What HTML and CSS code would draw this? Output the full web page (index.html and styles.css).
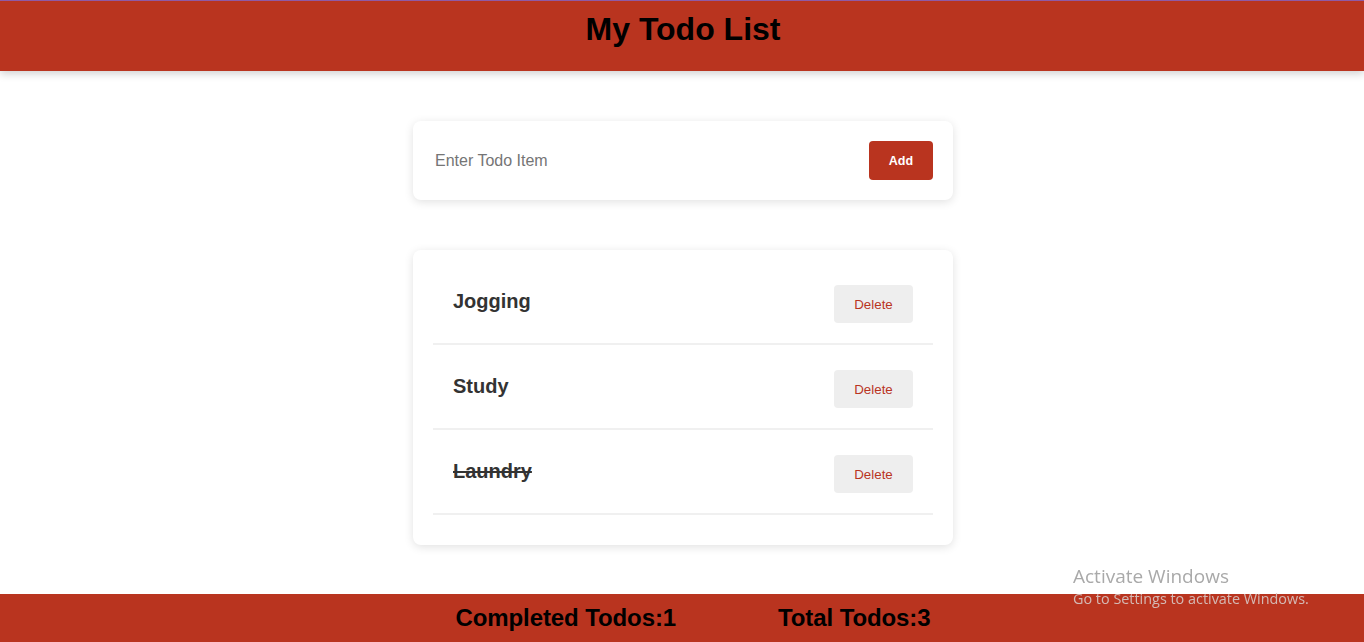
FILE: index.html
```html
<!DOCTYPE html>
<html lang="en">
<head>
<meta charset="utf-8">
<title>My Todo List</title>
<link rel="stylesheet" href="styles.css">
</head>
<body>
  <header class="app-header">
    <h1 class="app-title">My Todo List</h1>
  </header>
  <main class="app-main">
    <form class="card add-form">
      <input class="todo-input" type="text" placeholder="Enter Todo Item">
      <button class="add-btn" type="button">Add</button>
    </form>
    <ul class="card todo-list">
      <li class="todo-row">
        <span class="todo-text">Jogging</span>
        <button class="delete-btn" type="button">Delete</button>
      </li>
      <li class="todo-row">
        <span class="todo-text">Study</span>
        <button class="delete-btn" type="button">Delete</button>
      </li>
      <li class="todo-row">
        <span class="todo-text done">Laundry</span>
        <button class="delete-btn" type="button">Delete</button>
      </li>
    </ul>
  </main>
  <footer class="app-footer">
    <span class="stat">Completed Todos:1</span>
    <span class="stat">Total Todos:3</span>
  </footer>
  <div class="activate">
    <div class="activate-title">Activate Windows</div>
    <div class="activate-sub">Go to Settings to activate Windows.</div>
  </div>
</body>
</html>
```
FILE: styles.css
```css
* { box-sizing: border-box; }

html, body { height: 100%; }

body {
  margin: 0;
  padding-left: 2px;
  font-family: "Liberation Sans", Arial, sans-serif;
  background: #ffffff;
  display: flex;
  flex-direction: column;
  min-height: 100vh;
  overflow: hidden;
}

.app-header {
  background: #b9341f;
  border-top: 1px solid #8f5aa6;
  height: 71px;
  margin-left: -2px;
  padding: 10px 0 0 2px;
  box-shadow: 0 3px 8px rgba(0, 0, 0, 0.18);
  position: relative;
  z-index: 1;
}

.app-title {
  margin: 0;
  text-align: center;
  font-size: 32px;
  font-weight: 700;
  color: #000;
}

.app-main {
  display: flex;
  flex-direction: column;
  align-items: center;
  gap: 50px;
  padding-top: 50px;
}

.card {
  width: 540px;
  background: #fff;
  border-radius: 8px;
  box-shadow: 0 2px 10px rgba(0, 0, 0, 0.12);
}

.add-form {
  display: flex;
  align-items: center;
  height: 79px;
  padding: 0 20px;
  margin: 0;
}

.todo-input {
  flex: 1;
  border: none;
  outline: none;
  font-family: "Liberation Sans", Arial, sans-serif;
  font-size: 16px;
  padding: 0 2px;
  color: #333;
  background: transparent;
}

.todo-input::placeholder { color: #757575; }

.add-btn {
  width: 64px;
  height: 39px;
  border: none;
  border-radius: 4px;
  background: #b9341f;
  color: #fff;
  font-family: "Liberation Sans", Arial, sans-serif;
  font-size: 12.5px;
  font-weight: 700;
}

.todo-list {
  list-style: none;
  margin: 0;
  padding: 10px 20px 30px;
}

.todo-row {
  display: flex;
  justify-content: space-between;
  align-items: flex-start;
  padding: 25px 20px 20px;
  border-bottom: 2px solid #f0f0f0;
}

.todo-text {
  margin-top: 5px;
  font-size: 20px;
  font-weight: 700;
  color: #333;
}

.todo-text.done { text-decoration: line-through; }

.delete-btn {
  width: 79px;
  height: 38px;
  border: none;
  border-radius: 4px;
  background: #eeeeee;
  color: #b9341f;
  font-family: "Liberation Sans", Arial, sans-serif;
  font-size: 13.33px;
}

.app-footer {
  margin-top: auto;
  margin-left: -2px;
  height: 48px;
  background: #b9341f;
  display: flex;
  justify-content: center;
  gap: 102px;
  padding: 10px 0 0 22px;
}

.stat {
  font-size: 24px;
  font-weight: 700;
  letter-spacing: -0.1px;
  color: #000;
}

.activate {
  position: fixed;
  left: 1073px;
  top: 564px;
  font-family: "Open Sans", "Noto Sans", sans-serif;
  pointer-events: none;
}

.activate-title {
  font-size: 19px;
  line-height: 25px;
  color: #a9a9a9;
}

.activate-sub {
  font-size: 14.4px;
  line-height: 20px;
  color: rgba(215, 200, 196, 0.9);
}
```
